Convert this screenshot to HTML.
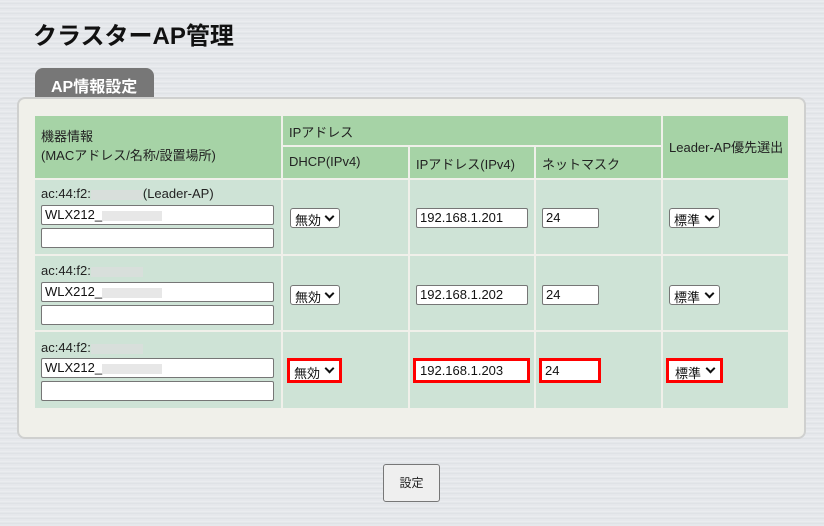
<!DOCTYPE html>
<html><head><meta charset="utf-8"><style>
*{margin:0;padding:0;box-sizing:border-box}
body{width:824px;height:526px;overflow:hidden;position:relative;font-family:"Liberation Sans","Noto Sans CJK JP",sans-serif;font-size:12px;color:#222;
background:repeating-linear-gradient(180deg,#e4e6ea 0px,#eceef1 2px,#dcdfe3 3px,#e8eaed 5px);}
.a{position:absolute}
h1{position:absolute;left:33px;top:16px;font-size:24px;font-weight:bold;color:#111}
.tab{left:35px;top:68px;width:119px;height:32px;background:#777;border-radius:8px 8px 0 0;color:#fff;font-weight:bold;font-size:16px;padding:5px 0 0 16px}
.panel{left:17px;top:97px;width:789px;height:342px;background:#f0f0ea;border:2px solid #cfd0cf;border-radius:8px}
.h{background:#a6d3a6;font-size:13px;color:#222}
.d{background:#cee3d6}
.in{position:absolute;background:#fff;border:1px solid #767676;border-radius:2px;height:20px;font-size:13px;padding:1px 0 0 3px;color:#111}
.sel{position:absolute;background:#fff;border:1px solid #767676;border-radius:3px;height:20px;font-size:13px;padding:1px 0 0 4px;color:#111}
.sel:after{content:"";position:absolute;right:6px;top:4px;width:5px;height:5px;border-right:2.5px solid #111;border-bottom:2.5px solid #111;transform:rotate(45deg)}
.red{border:3px solid #f00;border-radius:0}
.mac{font-size:13px;color:#222}
.blur{display:inline-block;width:52px;height:10px;background:#ddd;vertical-align:middle;opacity:.7}
.btn{left:383px;top:464px;width:57px;height:38px;background:#efefef;border:1px solid #777;border-radius:3px;font-size:12px;text-align:center;line-height:36px}
</style></head><body>
<h1>クラスターAP管理</h1>
<div class="a tab">AP情報設定</div>
<div class="a panel"></div>

<div class="a h" style="left:35px;top:116px;width:246px;height:62px;padding:11px 0 0 6px;line-height:19px">機器情報<br>(MACアドレス/名称/設置場所)</div>
<div class="a h" style="left:283px;top:116px;width:378px;height:29px;padding:6px 0 0 6px">IPアドレス</div>
<div class="a h" style="left:283px;top:147px;width:125px;height:31px;padding:7px 0 0 6px">DHCP(IPv4)</div>
<div class="a h" style="left:410px;top:147px;width:124px;height:31px;padding:7px 0 0 6px">IPアドレス(IPv4)</div>
<div class="a h" style="left:536px;top:147px;width:125px;height:31px;padding:7px 0 0 6px">ネットマスク</div>
<div class="a h" style="left:663px;top:116px;width:125px;height:62px;padding:21px 0 0 6px">Leader-AP優先選出</div>

<!-- row 1 -->
<div class="a d" style="left:35px;top:180px;width:246px;height:74px"></div>
<div class="a d" style="left:283px;top:180px;width:125px;height:74px"></div>
<div class="a d" style="left:410px;top:180px;width:124px;height:74px"></div>
<div class="a d" style="left:536px;top:180px;width:125px;height:74px"></div>
<div class="a d" style="left:663px;top:180px;width:125px;height:74px"></div>
<div class="a mac" style="left:41px;top:186px">ac:44:f2:<span class="blur"></span>(Leader-AP)</div>
<div class="in" style="left:41px;top:205px;width:233px">WLX212_<span class="blur" style="width:60px"></span></div>
<div class="in" style="left:41px;top:228px;width:233px"></div>
<div class="sel" style="left:290px;top:208px;width:50px">無効</div>
<div class="in" style="left:416px;top:208px;width:112px">192.168.1.201</div>
<div class="in" style="left:542px;top:208px;width:57px">24</div>
<div class="sel" style="left:669px;top:208px;width:51px">標準</div>

<!-- row 2 -->
<div class="a d" style="left:35px;top:256px;width:246px;height:74px"></div>
<div class="a d" style="left:283px;top:256px;width:125px;height:74px"></div>
<div class="a d" style="left:410px;top:256px;width:124px;height:74px"></div>
<div class="a d" style="left:536px;top:256px;width:125px;height:74px"></div>
<div class="a d" style="left:663px;top:256px;width:125px;height:74px"></div>
<div class="a mac" style="left:41px;top:263px">ac:44:f2:<span class="blur"></span></div>
<div class="in" style="left:41px;top:282px;width:233px">WLX212_<span class="blur" style="width:60px"></span></div>
<div class="in" style="left:41px;top:305px;width:233px"></div>
<div class="sel" style="left:290px;top:285px;width:50px">無効</div>
<div class="in" style="left:416px;top:285px;width:112px">192.168.1.202</div>
<div class="in" style="left:542px;top:285px;width:57px">24</div>
<div class="sel" style="left:669px;top:285px;width:51px">標準</div>

<!-- row 3 -->
<div class="a d" style="left:35px;top:332px;width:246px;height:76px"></div>
<div class="a d" style="left:283px;top:332px;width:125px;height:76px"></div>
<div class="a d" style="left:410px;top:332px;width:124px;height:76px"></div>
<div class="a d" style="left:536px;top:332px;width:125px;height:76px"></div>
<div class="a d" style="left:663px;top:332px;width:125px;height:76px"></div>
<div class="a mac" style="left:41px;top:340px">ac:44:f2:<span class="blur"></span></div>
<div class="in" style="left:41px;top:358px;width:233px">WLX212_<span class="blur" style="width:60px"></span></div>
<div class="in" style="left:41px;top:381px;width:233px"></div>
<div class="sel red" style="left:287px;top:358px;width:55px;height:25px;padding:2px 0 0 4px">無効</div>
<div class="in red" style="left:413px;top:358px;width:117px;height:25px;padding:2px 0 0 4px">192.168.1.203</div>
<div class="in red" style="left:539px;top:358px;width:62px;height:25px;padding:2px 0 0 3px">24</div>
<div class="sel red" style="left:666px;top:358px;width:57px;height:25px;padding:2px 0 0 6px">標準</div>

<div class="a btn">設定</div>
</body></html>
